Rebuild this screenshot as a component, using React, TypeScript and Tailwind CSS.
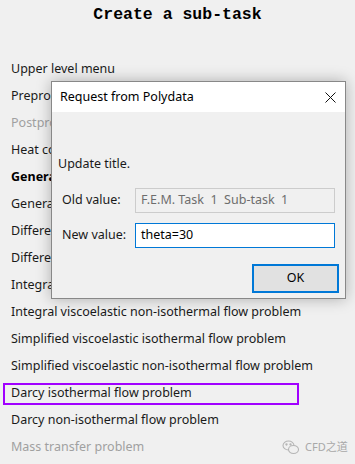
const items: { label: string; tone?: "muted" | "bold" | "selected" }[] = [
  { label: "Upper level menu" },
  { label: "Preprocessor" },
  { label: "Postprocessor", tone: "muted" },
  { label: "Heat conduction problem" },
  { label: "Generalized Newtonian isothermal flow problem", tone: "bold" },
  { label: "Generalized Newtonian non-isothermal flow problem" },
  { label: "Differential viscoelastic isothermal flow problem" },
  { label: "Differential viscoelastic non-isothermal flow problem" },
  { label: "Integral viscoelastic isothermal flow problem" },
  { label: "Integral viscoelastic non-isothermal flow problem" },
  { label: "Simplified viscoelastic isothermal flow problem" },
  { label: "Simplified viscoelastic non-isothermal flow problem" },
  { label: "Darcy isothermal flow problem", tone: "selected" },
  { label: "Darcy non-isothermal flow problem" },
  { label: "Mass transfer problem", tone: "muted" },
];

function MenuRow({ label, tone }: { label: string; tone?: string }) {
  if (tone === "selected") {
    return (
      <div className="h-[27px] flex items-center">
        <div className="ml-[3px] w-[296px] h-[22px] border-2 border-[#a100ff] pl-[6px] flex items-center text-[#1a1a1a]">
          {label}
        </div>
      </div>
    );
  }
  return (
    <div
      className={
        "h-[27px] flex items-center pl-[11px] whitespace-nowrap " +
        (tone === "muted"
          ? "text-[#a0a0a0]"
          : tone === "bold"
            ? "font-bold text-black"
            : "text-[#1a1a1a]")
      }
    >
      {label}
    </div>
  );
}

function Dialog() {
  return (
    <div className="absolute left-[51px] top-[81px] w-[295px] h-[218px] border border-[#888] bg-[#f0f0f0] shadow-[0_0_14px_rgba(0,0,0,0.28)] flex flex-col">
      <div className="h-[30px] bg-white flex items-center justify-between pl-[8px] pr-[9px] text-black">
        <span>Request from Polydata</span>
        <svg width="11" height="11" viewBox="0 0 11 11" className="mt-[1px]">
          <path d="M0.5 0.5 L10.5 10.5 M10.5 0.5 L0.5 10.5" stroke="#111" strokeWidth="1" />
        </svg>
      </div>
      <div className="flex flex-col pl-[6px] pr-[10px]">
        <div className="h-[20px] mt-[42px] flex items-center text-[#1a1a1a]">Update title.</div>
        <div className="flex items-center mt-[14px] h-[25px]">
          <span className="w-[77px] pl-[4px] text-[#1a1a1a]">Old value:</span>
          <div className="w-[200px] h-[25px] border border-[#cccccc] bg-[#f0f0f0] flex items-center pl-[5px] text-[#6d6d6d] whitespace-pre">
            {"F.E.M. Task  1  Sub-task  1"}
          </div>
        </div>
        <div className="flex items-center mt-[10px] h-[25px]">
          <span className="w-[77px] pl-[4px] text-[#1a1a1a]">New value:</span>
          <div className="w-[200px] h-[25px] border border-[#0078d7] bg-white flex items-center pl-[5px] text-black">
            theta=30
          </div>
        </div>
        <div className="flex justify-end mt-[16px]">
          <div className="w-[87px] h-[29px] mr-[-4px] border-2 border-[#0078d7] bg-[#e1e1e1] flex items-center justify-center text-black">
            OK
          </div>
        </div>
      </div>
    </div>
  );
}

function Watermark() {
  return (
    <div className="absolute left-[282px] top-[439px] flex items-center gap-[5px] text-[#a8a8a8] text-[11px]">
      <svg width="18" height="15" viewBox="0 0 18 15" fill="none" stroke="#b5b5b5" strokeWidth="1.1">
        <ellipse cx="6.5" cy="5.5" rx="5.5" ry="4.5" fill="#f0f0f0" />
        <ellipse cx="11.5" cy="9.5" rx="5" ry="4" fill="#f0f0f0" />
        <circle cx="4.5" cy="4.5" r="0.6" fill="#b5b5b5" />
        <circle cx="8.5" cy="4.5" r="0.6" fill="#b5b5b5" />
      </svg>
      <span>CFD之道</span>
    </div>
  );
}

export default function App() {
  return (
    <div
      className="relative w-[355px] h-[464px] bg-[#f0f0f0] overflow-hidden text-[12.5px]"
      style={{ fontFamily: '"Noto Sans", "Noto Sans CJK SC", sans-serif' }}
    >
      <div className="h-[56px] pt-[4px] flex justify-center">
        <span
          className="text-[16.5px] font-bold text-black leading-[22px]"
          style={{ fontFamily: '"Liberation Mono", monospace' }}
        >
          Create a sub-task
        </span>
      </div>
      <div className="flex flex-col">
        {items.map((it) => (
          <MenuRow key={it.label} label={it.label} tone={it.tone} />
        ))}
      </div>
      <Dialog />
      <Watermark />
    </div>
  );
}
